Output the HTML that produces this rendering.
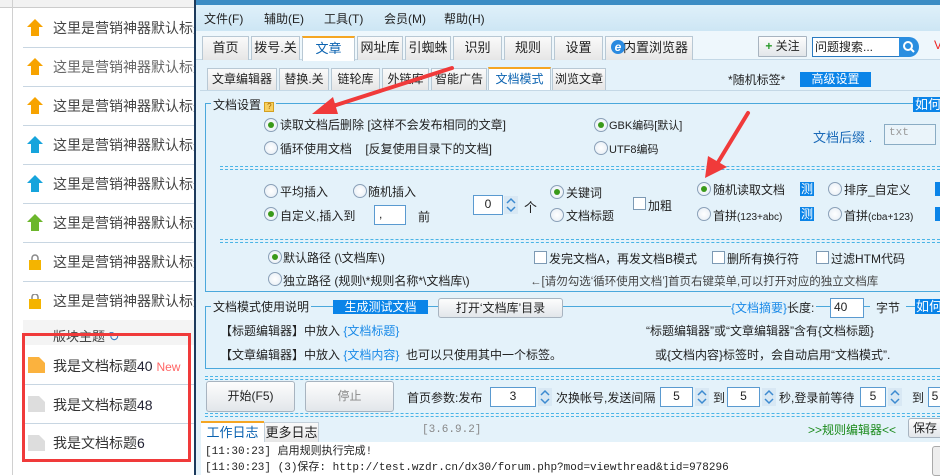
<!DOCTYPE html>
<html><head><meta charset="utf-8"><style>
*{margin:0;padding:0;box-sizing:border-box}
body{width:940px;height:475px;overflow:hidden;position:relative;background:#fff;font-family:"Liberation Sans","Noto Sans CJK SC",sans-serif;font-size:12px;color:#222}
.a{position:absolute;white-space:nowrap}
.lt{font-size:14px;color:#444;line-height:18px}
.sep{position:absolute;left:23px;width:172px;height:1px;background:#c8d6e2}
.r{position:absolute;width:14px;height:14px;border-radius:50%;border:1px solid #8aa0b8;background:radial-gradient(#fff,#e4ecf4)}
.r.on::after{content:"";position:absolute;left:3px;top:3px;width:6px;height:6px;border-radius:50%;background:#3a9a1a}
.cb{position:absolute;width:13px;height:13px;border:1px solid #7d9ab4;background:#fff}
.tab{position:absolute;height:24px;border:1px solid #b8c8d4;border-bottom:none;background:linear-gradient(#fafafa,#e6e6e6);text-align:center;line-height:22px;font-size:13px}
.stab{position:absolute;height:22px;border:1px solid #b8c8d4;border-bottom:none;background:linear-gradient(#fafafa,#e6e6e6);text-align:center;line-height:21px;font-size:12px}
.act{background:#fff;border-top:2px solid #f5a623;color:#0a62b0}
.inp{position:absolute;background:#fff;border:1px solid #5a9ad0;text-align:center;line-height:17px}
.blue{position:absolute;background:#0a84e8;color:#fff;text-align:center}
.btn{position:absolute;border:1px solid #a8b4c0;border-radius:3px;background:linear-gradient(#fdfdfd,#e2e6ea);text-align:center}
.dash{position:absolute;left:205px;width:735px;height:4px;border-top:1px dashed #4ab4e6;border-bottom:1px dashed #4ab4e6}
.spin{position:absolute;width:14px;height:18px;background:#d8e8f4}
</style></head><body>
<div class="a" style="left:0;top:0;width:195px;height:8px;background:#f2f2f2;border-bottom:1px solid #ccc"></div>
<div class="a" style="left:12px;top:0;width:1px;height:475px;background:#d0d0d0"></div>
<svg class="a" style="left:27px;top:19px" width="16" height="260" viewBox="0 0 16 260">
<g><path d="M8 0L16 8H12V17H4V8H0Z" fill="#f7a300"/></g>
<g transform="translate(0,39)"><path d="M8 0L16 8H12V17H4V8H0Z" fill="#f7a300"/></g>
<g transform="translate(0,78)"><path d="M8 0L16 8H12V17H4V8H0Z" fill="#f7a300"/></g>
<g transform="translate(0,117)"><path d="M8 0L16 8H12V17H4V8H0Z" fill="#16a4dc"/></g>
<g transform="translate(0,156)"><path d="M8 0L16 8H12V17H4V8H0Z" fill="#16a4dc"/></g>
<g transform="translate(0,195)"><path d="M8 0L16 8H12V17H4V8H0Z" fill="#6cb62c"/></g>
<g transform="translate(2,236)"><rect x="0" y="5" width="12" height="10" fill="#f4b400"/><path d="M3 5V3a3 3 0 0 1 6 0v2" stroke="#888" stroke-width="1.5" fill="none"/></g>
</svg>
<svg class="a" style="left:29px;top:294px" width="14" height="16"><rect x="0" y="5" width="12" height="10" fill="#f4b400"/><path d="M3 5V3a3 3 0 0 1 6 0v2" stroke="#888" stroke-width="1.5" fill="none"/></svg>
<div class="a lt" style="left:53px;top:19px">这里是营销神器默认标题</div><div class="sep" style="top:47px"></div>
<div class="a lt" style="left:53px;top:58px;color:#666">这里是营销神器默认标题</div><div class="sep" style="top:86px"></div>
<div class="a lt" style="left:53px;top:97px">这里是营销神器默认标题</div><div class="sep" style="top:125px"></div>
<div class="a lt" style="left:53px;top:136px">这里是营销神器默认标题</div><div class="sep" style="top:164px"></div>
<div class="a lt" style="left:53px;top:175px">这里是营销神器默认标题</div><div class="sep" style="top:203px"></div>
<div class="a lt" style="left:53px;top:214px">这里是营销神器默认标题</div><div class="sep" style="top:242px"></div>
<div class="a lt" style="left:53px;top:253px">这里是营销神器默认标题</div><div class="sep" style="top:281px"></div>
<div class="a lt" style="left:53px;top:292px">这里是营销神器默认标题</div><div class="sep" style="top:320px;background:#e4e4e4"></div>
<div class="a" style="left:23px;top:320px;width:172px;height:25px;background:#f4f4f4"></div>
<div class="a" style="left:53px;top:326px;font-size:13px;color:#444">版块主题 <span style="color:#3a7ac0">↻</span></div>
<div class="sep" style="top:384px"></div><div class="sep" style="top:423px"></div>
<svg class="a" style="left:28px;top:357px" width="18" height="100"><path d="M0 0H11L17 6V16H0Z" fill="#fbb23e"/><path d="M0 39H11L17 45V55H0Z" fill="#ddd"/><path d="M0 78H11L17 84V94H0Z" fill="#ddd"/></svg>
<div class="a lt" style="left:53px;top:357px;color:#333">我是文档标题<span style="color:#223">40</span> <span style="color:#f66;font-size:12px">New</span></div>
<div class="a lt" style="left:53px;top:396px;color:#333">我是文档标题<span style="color:#223">48</span></div>
<div class="a lt" style="left:53px;top:434px;color:#333">我是文档标题<span style="color:#223">6</span></div>
<div class="a" style="left:22px;top:333px;width:169px;height:129px;border:3px solid #f03a3a"></div>

<div class="a" style="left:194px;top:0;width:746px;height:475px;background:#e4f2fa;border-left:2px solid #1c3a5c"></div>
<div class="a" style="left:196px;top:0;width:744px;height:5px;background:#3c8cc4"></div>
<div class="a" style="left:196px;top:5px;width:744px;height:26px;background:linear-gradient(#dff0fa,#cde6f4)"></div>
<div class="a" style="left:204px;top:10px">文件(F)</div>
<div class="a" style="left:264px;top:10px">辅助(E)</div>
<div class="a" style="left:324px;top:10px">工具(T)</div>
<div class="a" style="left:384px;top:10px">会员(M)</div>
<div class="a" style="left:444px;top:10px">帮助(H)</div>
<div class="a" style="left:196px;top:31px;width:744px;height:29px;background:#eef7fc;border-bottom:1px solid #c4d8e6"></div>
<div class="tab" style="left:202px;top:36px;width:47px">首页</div>
<div class="tab" style="left:251px;top:36px;width:49px">拨号.关</div>
<div class="tab act" style="left:302px;top:36px;width:53px;height:25px">文章</div>
<div class="tab" style="left:357px;top:36px;width:46px">网址库</div>
<div class="tab" style="left:405px;top:36px;width:46px">引蜘蛛</div>
<div class="tab" style="left:453px;top:36px;width:49px">识别</div>
<div class="tab" style="left:504px;top:36px;width:48px">规则</div>
<div class="tab" style="left:554px;top:36px;width:49px">设置</div>
<div class="tab" style="left:605px;top:36px;width:88px;text-align:right;padding-right:4px">内置浏览器</div>
<div class="a" style="left:611px;top:40px;width:14px;height:14px;border-radius:50%;background:#2a8ae0;color:#fff;font-size:12px;line-height:14px;text-align:center;font-style:italic;font-weight:bold">e</div>
<div class="btn" style="left:758px;top:36px;width:49px;height:21px;line-height:19px;border-radius:1px"><span style="color:#2a9a2a;font-weight:bold">+</span> 关注</div>
<div class="a" style="left:812px;top:37px;width:88px;height:20px;border:1px solid #2a7ac0;background:#fff;padding-left:2px;line-height:18px">问题搜索...</div>
<div class="a" style="left:899px;top:37px;width:20px;height:20px;border-radius:0 10px 10px 0;background:#2a8ee0"><svg width="20" height="20"><circle cx="9" cy="9" r="4" stroke="#fff" stroke-width="2" fill="none"/><path d="M12 12L15 15" stroke="#fff" stroke-width="2"/></svg></div>
<div class="a" style="left:934px;top:38px;color:#e22">V</div>
<div class="stab" style="left:207px;top:68px;width:70px">文章编辑器</div>
<div class="stab" style="left:279px;top:68px;width:50px">替换.关</div>
<div class="stab" style="left:331px;top:68px;width:49px">链轮库</div>
<div class="stab" style="left:382px;top:68px;width:47px">外链库</div>
<div class="stab" style="left:431px;top:68px;width:56px">智能广告</div>
<div class="stab act" style="left:488px;top:67px;width:63px;height:24px">文档模式</div>
<div class="stab" style="left:552px;top:68px;width:54px">浏览文章</div>
<div class="a" style="left:200px;top:90px;width:740px;height:1px;background:#c4d8e6"></div>
<div class="a" style="left:728px;top:71px">*随机标签*</div>
<div class="blue" style="left:800px;top:72px;width:71px;height:15px;line-height:15px">高级设置</div>

<div class="a" style="left:205px;top:103px;width:740px;height:189px;border:1px solid #4aa8dc;border-right:none"></div>
<div class="a" style="left:211px;top:96px;background:#e4f2fa;padding:0 2px">文档设置 <span style="display:inline-block;width:10px;height:10px;background:#f7d060;border:1px solid #d4a020;font-size:8px;line-height:8px;text-align:center;color:#a06000">?</span></div>
<div class="blue" style="left:913px;top:97px;width:30px;height:15px;line-height:15px;font-size:13px">如何</div>
<div class="r on" style="left:264px;top:118px"></div><div class="a" style="left:280px;top:116px">读取文档后删除 [这样不会发布相同的文章]</div>
<div class="r" style="left:264px;top:141px"></div><div class="a" style="left:280px;top:140px">循环使用文档&nbsp;&nbsp;&nbsp;&nbsp;[反复使用目录下的文档]</div>
<div class="r on" style="left:594px;top:118px"></div><div class="a" style="left:609px;top:117px;font-size:11px">GBK编码[默认]</div>
<div class="r" style="left:594px;top:141px"></div><div class="a" style="left:609px;top:141px;font-size:11px">UTF8编码</div>
<div class="a" style="left:813px;top:127px;color:#1a6ab8;font-size:13px">文档后缀 .</div>
<div class="a" style="left:884px;top:124px;width:52px;height:21px;border:1px solid #8aacc4;background:#eaf4fa;color:#999;padding:2px 4px;font-family:'Liberation Mono',monospace;font-size:11px">txt</div>
<div class="dash" style="top:166px;left:220px;width:720px"></div>
<div class="r" style="left:264px;top:184px"></div><div class="a" style="left:280px;top:183px">平均插入</div>
<div class="r" style="left:353px;top:184px"></div><div class="a" style="left:368px;top:183px">随机插入</div>
<div class="r on" style="left:264px;top:207px"></div><div class="a" style="left:280px;top:207px">自定义,插入到</div>
<div class="inp" style="left:374px;top:205px;width:32px;height:20px;text-align:left;padding-left:4px">,</div>
<div class="a" style="left:418px;top:208px">前</div>
<div class="inp" style="left:473px;top:195px;width:30px;height:20px">0</div>
<svg class="spin" style="left:504px;top:196px" viewBox="0 0 14 18"><path d="M3 7L7 3L11 7M3 11L7 15L11 11" stroke="#3c8ad0" stroke-width="1.5" fill="none"/></svg>
<div class="a" style="left:524px;top:197px;font-size:13px">个</div>
<div class="r on" style="left:550px;top:185px"></div><div class="a" style="left:566px;top:184px">关键词</div>
<div class="r" style="left:550px;top:208px"></div><div class="a" style="left:566px;top:207px">文档标题</div>
<div class="cb" style="left:633px;top:197px"></div><div class="a" style="left:648px;top:197px">加粗</div>
<div class="r on" style="left:697px;top:182px"></div><div class="a" style="left:713px;top:181px">随机读取文档</div>
<div class="blue" style="left:800px;top:182px;width:14px;height:14px;line-height:14px">测</div>
<div class="r" style="left:697px;top:207px"></div><div class="a" style="left:713px;top:207px">首拼<span style="font-size:10px">(123+abc)</span></div>
<div class="blue" style="left:800px;top:207px;width:14px;height:14px;line-height:14px">测</div>
<div class="r" style="left:828px;top:182px"></div><div class="a" style="left:844px;top:181px">排序_自定义</div>
<div class="r" style="left:828px;top:207px"></div><div class="a" style="left:844px;top:207px">首拼<span style="font-size:10px">(cba+123)</span></div>
<div class="blue" style="left:935px;top:182px;width:6px;height:14px"></div>
<div class="blue" style="left:935px;top:207px;width:6px;height:14px"></div>
<div class="dash" style="top:239px;left:220px;width:720px"></div>
<div class="r on" style="left:268px;top:250px"></div><div class="a" style="left:283px;top:249px">默认路径 (\文档库\)</div>
<div class="r" style="left:268px;top:272px"></div><div class="a" style="left:283px;top:272px">独立路径 (规则\*规则名称*\文档库\)</div>
<div class="cb" style="left:534px;top:251px"></div><div class="a" style="left:549px;top:250px">发完文档A，再发文档B模式</div>
<div class="cb" style="left:712px;top:251px"></div><div class="a" style="left:727px;top:250px">删所有换行符</div>
<div class="cb" style="left:816px;top:251px"></div><div class="a" style="left:831px;top:250px">过滤HTM代码</div>
<div class="a" style="left:530px;top:273px;color:#444;font-size:11.5px">←[请勿勾选‘循环使用文档’]首页右键菜单,可以打开对应的独立文档库</div>

<div class="a" style="left:205px;top:306px;width:740px;height:63px;border:1px solid #4aa8dc;border-right:none"></div>
<div class="a" style="left:211px;top:298px;background:#e4f2fa;padding:0 2px">文档模式使用说明</div>
<div class="blue" style="left:333px;top:300px;width:95px;height:14px;line-height:14px">生成测试文档</div>
<div class="btn" style="left:438px;top:298px;width:125px;height:20px;line-height:18px">打开‘文档库’目录</div>
<div class="a" style="left:731px;top:299px;background:#e4f2fa;color:#1a8ae8;padding-right:2px">{文档摘要}<span style="color:#222">长度:</span></div>
<div class="inp" style="left:830px;top:298px;width:34px;height:20px;text-align:left;padding-left:3px">40</div>
<div class="a" style="left:870px;top:299px;background:#e4f2fa;padding:0 6px">字节</div>
<div class="blue" style="left:915px;top:299px;width:28px;height:15px;line-height:15px;font-size:13px">如何</div>
<div class="a" style="left:220px;top:322px">【标题编辑器】中放入 <span style="color:#1a8ae8">{文档标题}</span></div>
<div class="a" style="left:220px;top:346px">【文章编辑器】中放入 <span style="color:#1a8ae8">{文档内容}</span>&nbsp; 也可以只使用其中一个标签。</div>
<div class="a" style="left:646px;top:322px">“标题编辑器”或“文章编辑器”含有{文档标题}</div>
<div class="a" style="left:655px;top:346px">或{文档内容}标签时，会自动启用“文档模式”.</div>
<div class="dash" style="top:376px"></div>
<div class="btn" style="left:206px;top:381px;width:89px;height:31px;line-height:29px">开始(F5)</div>
<div class="btn" style="left:305px;top:381px;width:89px;height:31px;line-height:29px;color:#888">停止</div>
<div class="a" style="left:407px;top:389px">首页参数:发布</div>
<div class="inp" style="left:490px;top:387px;width:46px;height:20px">3</div>
<svg class="spin" style="left:538px;top:388px" viewBox="0 0 14 18"><path d="M3 7L7 3L11 7M3 11L7 15L11 11" stroke="#3c8ad0" stroke-width="1.5" fill="none"/></svg>
<div class="a" style="left:556px;top:389px">次换帐号,发送间隔</div>
<div class="inp" style="left:660px;top:387px;width:33px;height:20px">5</div>
<svg class="spin" style="left:695px;top:388px" viewBox="0 0 14 18"><path d="M3 7L7 3L11 7M3 11L7 15L11 11" stroke="#3c8ad0" stroke-width="1.5" fill="none"/></svg>
<div class="a" style="left:713px;top:389px">到</div>
<div class="inp" style="left:727px;top:387px;width:33px;height:20px">5</div>
<svg class="spin" style="left:762px;top:388px" viewBox="0 0 14 18"><path d="M3 7L7 3L11 7M3 11L7 15L11 11" stroke="#3c8ad0" stroke-width="1.5" fill="none"/></svg>
<div class="a" style="left:779px;top:389px">秒,登录前等待</div>
<div class="inp" style="left:860px;top:387px;width:26px;height:20px">5</div>
<svg class="spin" style="left:888px;top:388px" viewBox="0 0 14 18"><path d="M3 7L7 3L11 7M3 11L7 15L11 11" stroke="#3c8ad0" stroke-width="1.5" fill="none"/></svg>
<div class="a" style="left:912px;top:389px">到</div>
<div class="inp" style="left:928px;top:387px;width:14px;height:20px">5</div>
<div class="dash" style="top:413px"></div>
<div class="a" style="left:201px;top:421px;width:63px;height:22px;background:#fff;border-top:2px solid #f5a623;color:#0a62b0;text-align:center;line-height:20px;font-size:13px">工作日志</div>
<div class="a" style="left:264px;top:422px;width:55px;height:21px;background:linear-gradient(#fafafa,#e6e6e6);border:1px solid #c4d0da;border-bottom:none;text-align:center;line-height:19px;font-size:13px">更多日志</div>
<div class="a" style="left:422px;top:424px;color:#888;font-family:'Liberation Mono',monospace;font-size:11px">[3.6.9.2]</div>
<div class="a" style="left:808px;top:421px;color:#1a8a1a">&gt;&gt;规则编辑器&lt;&lt;</div>
<div class="btn" style="left:908px;top:418px;width:40px;height:20px;line-height:18px;text-align:left;padding-left:4px">保存</div>
<div class="a" style="left:201px;top:442px;width:739px;height:33px;background:#fff"></div>
<div class="a" style="left:205px;top:444px;font-family:'Liberation Mono',monospace;font-size:11px;line-height:16px">[11:30:23] 启用规则执行完成!<br>[11:30:23] (3)保存: http://test.wzdr.cn/dx30/forum.php?mod=viewthread&amp;tid=978296</div>
<div class="a" style="left:932px;top:446px;width:12px;height:30px;border:1px solid #aaa;border-radius:3px;background:#eee"></div>

<svg class="a" style="left:0;top:0" width="940" height="475">
<path d="M452 68L330 107" stroke="#f03a3a" stroke-width="4" stroke-linecap="round"/>
<path d="M312 114L333 97L338 114Z" fill="#f03a3a"/>
<path d="M748 113L717 164" stroke="#f03a3a" stroke-width="4" stroke-linecap="round"/>
<path d="M705 178L708 156L727 167Z" fill="#f03a3a"/>
</svg>
</body></html>
